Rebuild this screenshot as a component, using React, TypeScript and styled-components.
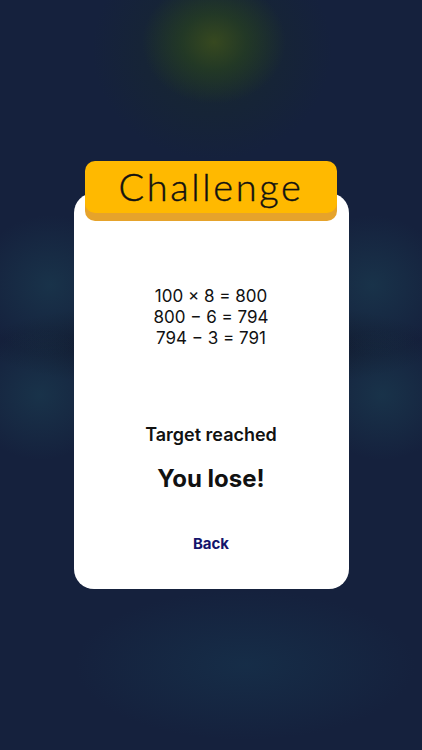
import styled, { createGlobalStyle } from 'styled-components'

const GlobalStyle = createGlobalStyle`
    html, body {
        margin: 0;
        padding: 0;
        background: #15213d;
    }

    * {
        box-sizing: border-box;
    }
`

const Screen = styled.div`
    width: 100%;
    height: 750px;
    overflow: hidden;
    display: flex;
    flex-direction: column;
    align-items: center;
    padding-top: 161px;
    font-family: Inter, "Noto Sans", sans-serif;
    background:
        radial-gradient(ellipse 72px 62px at 214px 42px, rgba(58, 76, 30, 0.9), rgba(42, 68, 30, 0.6) 45%, rgba(21, 33, 61, 0) 100%),
        radial-gradient(ellipse 120px 110px at 212px 50px, rgba(24, 42, 42, 0.8), rgba(21, 33, 61, 0) 100%),
        radial-gradient(ellipse 75px 70px at 50px 285px, rgba(28, 68, 86, 0.5), rgba(21, 33, 61, 0) 100%),
        radial-gradient(ellipse 75px 70px at 372px 285px, rgba(28, 68, 86, 0.5), rgba(21, 33, 61, 0) 100%),
        radial-gradient(ellipse 70px 65px at 40px 395px, rgba(28, 68, 86, 0.5), rgba(21, 33, 61, 0) 100%),
        radial-gradient(ellipse 70px 65px at 382px 395px, rgba(28, 68, 86, 0.5), rgba(21, 33, 61, 0) 100%),
        radial-gradient(ellipse 230px 45px at 211px 345px, rgba(10, 14, 20, 0.6), rgba(21, 33, 61, 0) 100%),
        radial-gradient(ellipse 170px 75px at 245px 665px, rgba(22, 50, 76, 0.7), rgba(21, 33, 61, 0) 100%),
        #15213d;
`

const Banner = styled.div`
    position: relative;
    z-index: 1;
    width: 252px;
    height: 52px;
    border-radius: 10px;
    background: #ffb900;
    box-shadow: 0 8px 0 #e6a32b;
    display: flex;
    align-items: center;
    justify-content: center;
`

const BannerTitle = styled.span`
    font-family: Lato, "Noto Sans", sans-serif;
    font-weight: 300;
    font-size: 38px;
    line-height: 1;
    color: #111;
    letter-spacing: 2.6px;
    margin-top: -2px;
    -webkit-text-stroke: 0.4px #111;
`

const Card = styled.div`
    width: 275px;
    margin-top: -20px;
    padding: 93px 0 36px;
    border-radius: 20px;
    background: #ffffff;
    display: flex;
    flex-direction: column;
    align-items: center;
    color: #111;
`

const Steps = styled.div`
    display: flex;
    flex-direction: column;
    align-items: center;
    font-size: 17px;
    line-height: 21px;
    font-weight: 400;
`

const Status = styled.div`
    margin-top: 75px;
    font-size: 18px;
    line-height: 22px;
    font-weight: 600;
`

const Result = styled.div`
    margin-top: 18px;
    font-size: 24px;
    line-height: 29px;
    font-weight: 700;
`

const BackButton = styled.button`
    margin-top: 41px;
    padding: 0;
    border: none;
    background: none;
    font-family: inherit;
    font-size: 15px;
    line-height: 19px;
    font-weight: 700;
    color: #14146b;
    cursor: pointer;
`

const steps = ['100 × 8 = 800', '800 − 6 = 794', '794 − 3 = 791']

const App = () => {
    return (
        <>
            <GlobalStyle />
            <Screen>
                <Banner>
                    <BannerTitle>Challenge</BannerTitle>
                </Banner>
                <Card>
                    <Steps>
                        {steps.map((step) => (
                            <span key={step}>{step}</span>
                        ))}
                    </Steps>
                    <Status>Target reached</Status>
                    <Result>You lose!</Result>
                    <BackButton>Back</BackButton>
                </Card>
            </Screen>
        </>
    )
}

export default App
